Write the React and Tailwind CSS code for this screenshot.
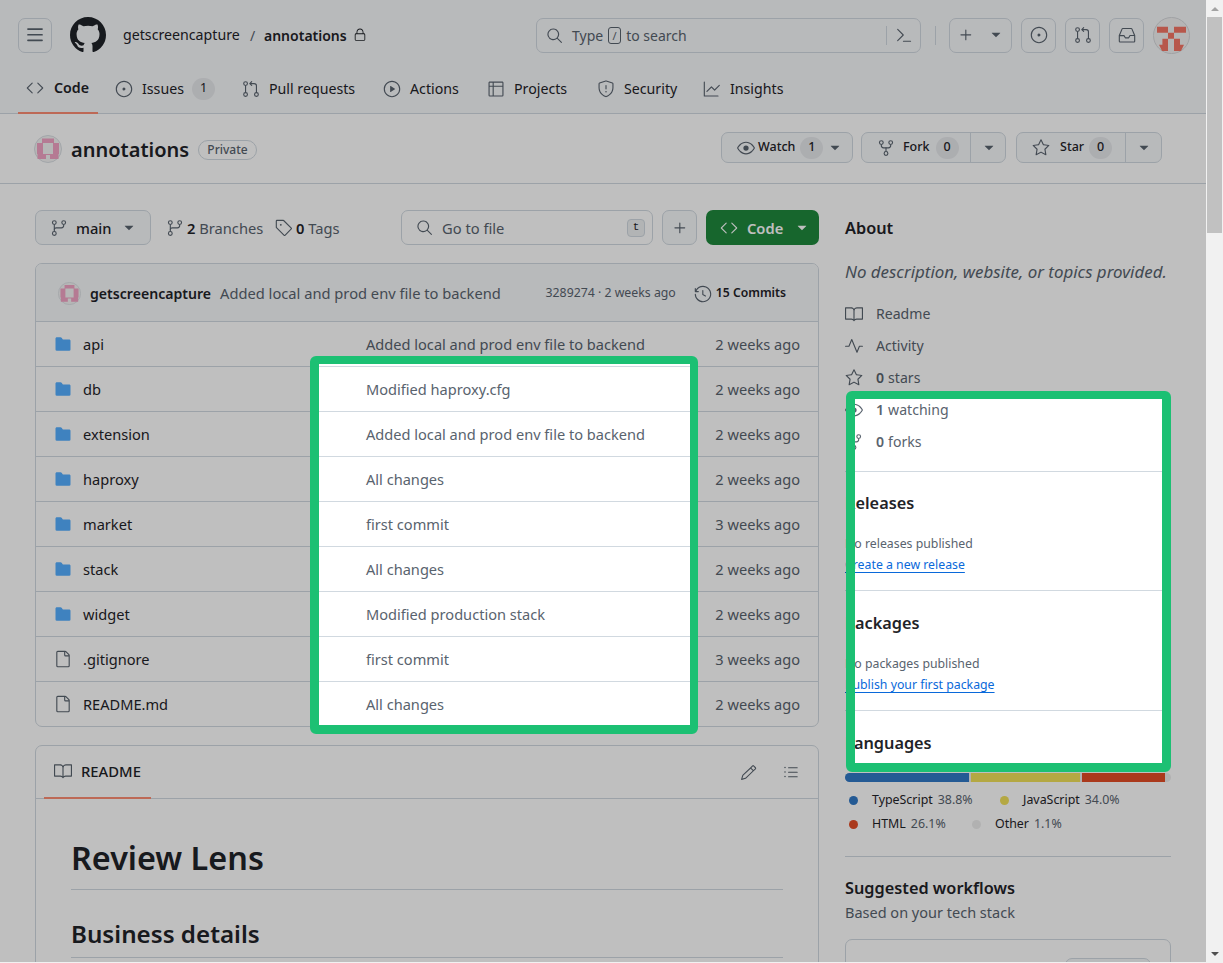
import React from "react";
import {
  GoLock, GoSearch, GoCommandPalette, GoPlus, GoTriangleDown, GoIssueOpened,
  GoGitPullRequest, GoInbox, GoCode, GoPlay, GoTable, GoShield, GoGraph, GoEye, GoRepoForked, GoStar,
  GoGitBranch, GoTag, GoHistory, GoFileDirectoryFill, GoFile, GoBook, GoPencil, GoListUnordered, GoPulse,
} from "react-icons/go";

const GoThreeBars = ({ size = 16 }) => (
  <svg viewBox="0 0 16 16" width={size} height={size} fill="currentColor">
    <path d="M1 2.75A.75.75 0 0 1 1.75 2h12.5a.75.75 0 0 1 0 1.5H1.75A.75.75 0 0 1 1 2.75Zm0 5A.75.75 0 0 1 1.75 7h12.5a.75.75 0 0 1 0 1.5H1.75A.75.75 0 0 1 1 7.75ZM1.75 12h12.5a.75.75 0 0 1 0 1.5H1.75a.75.75 0 0 1 0-1.5Z" />
  </svg>
);
const GoMarkGithub = ({ size = 16, className = "" }) => (
  <svg viewBox="0 0 16 16" width={size} height={size} fill="currentColor" className={className}>
    <path d="M8 0c4.42 0 8 3.58 8 8a8.013 8.013 0 0 1-5.45 7.59c-.4.08-.55-.17-.55-.38 0-.27.01-1.13.01-2.2 0-.75-.25-1.23-.54-1.48 1.78-.2 3.65-.88 3.65-3.95 0-.88-.31-1.59-.82-2.15.08-.2.36-1.02-.08-2.12 0 0-.67-.22-2.2.82-.64-.18-1.32-.27-2-.27-.68 0-1.36.09-2 .27-1.53-1.03-2.2-.82-2.2-.82-.44 1.1-.16 1.92-.08 2.12-.51.56-.82 1.28-.82 2.15 0 3.06 1.86 3.75 3.64 3.95-.23.2-.44.55-.51 1.07-.46.21-1.61.55-2.33-.66-.15-.24-.6-.83-1.23-.82-.67.01-.27.38.01.53.34.19.73.9.82 1.13.16.45.68 1.31 2.69.94 0 .67.01 1.3.01 1.49 0 .21-.15.45-.55.38A7.995 7.995 0 0 1 0 8c0-4.42 3.58-8 8-8Z" />
  </svg>
);

const Pink = ({ className }) => (
  <svg viewBox="0 0 28 28" className={className}>
    <circle cx="14" cy="14" r="13.5" fill="#f3f3f3" stroke="#d8dde2" />
    <path fill="#f2a3c4" fillRule="evenodd" d="M8 3.5h12V8h5v11h-.5v5H16v-4h-4v4H3.5v-5H3V8h5zM9 8v11h10V8z" />
  </svg>
);

const UserAvatar = () => (
  <svg viewBox="0 0 37 37" className="w-[37px] h-[37px] shrink-0">
    <circle cx="18.5" cy="18.5" r="18" fill="#f2f2f2" stroke="#d5d8db" />
    <path fill="#f57565" d="M4 9.7h11v6H4zM21 9.7h12v6H21zM15 15.7h6v6h-6zM9.4 21.7H15v6H9.4zM21 21.7h6v6h-6zM6 27.7h9v6.2H9zM21 27.7h10l-3 6.2h-7z" />
  </svg>
);

const HBtn = ({ children, className = "" }) => (
  <div className={`h-[35px] flex items-center justify-center rounded-[7px] border border-[#d1d9e0] text-[#59636e] ${className}`}>{children}</div>
);

const tabs = [
  { icon: GoIssueOpened, label: "Issues", count: "1", w: "w-[127px]" },
  { icon: GoGitPullRequest, label: "Pull requests", w: "w-[141px]" },
  { icon: GoPlay, label: "Actions", w: "w-[104px]" },
  { icon: GoTable, label: "Projects", w: "w-[110px]" },
  { icon: GoShield, label: "Security", w: "w-[106px]" },
  { icon: GoGraph, label: "Insights", w: "w-[100px]" },
];

const Counter = ({ children, className = "" }) => (
  <span className={`inline-flex items-center justify-center h-[22px] w-[23px] rounded-full bg-[#e6e8eb] text-[12.5px] text-[#1f2328] ${className}`}>{children}</span>
);

const Header = () => (
  <header className="bg-[#f6f8fa] border-b border-[#d1d9e0] h-[114px]">
    <div className="h-[70px] flex items-center pl-[18px]">
      <HBtn className="w-[34px]"><GoThreeBars size={18} /></HBtn>
      <GoMarkGithub size={36} className="ml-[18px] text-[#1f2328]" />
      <span className="ml-[17px] w-[118px] text-[14.2px] text-[#1f2328] whitespace-nowrap">getscreencapture</span>
      <span className="w-[23px] text-center text-[14px] text-[#59636e]">/</span>
      <span className="w-[89px] text-[14px] font-semibold text-[#1f2328] whitespace-nowrap">annotations</span>
      <GoLock size={14} className="text-[#1f2328]" />
      <div className="ml-[169px] w-[385px] h-[35px] rounded-[7px] border border-[#d1d9e0] flex items-center text-[#59636e] pl-[9px]">
        <GoSearch size={17} />
        <span className="ml-[9px] text-[14px]">Type</span>
        <span className="ml-[5px] w-[13px] h-[17px] rounded-[3px] border border-[#59636e] text-[11px] leading-[15px] text-center">/</span>
        <span className="ml-[5px] text-[14px] whitespace-nowrap">to search</span>
        <span className="ml-auto w-px h-[19px] bg-[#d1d9e0]" />
        <GoCommandPalette size={18} className="ml-[8px] mr-[7px]" />
      </div>
      <span className="ml-[14px] w-px h-[19px] bg-[#d1d9e0]" />
      <HBtn className="ml-[13px] w-[63px] gap-[13px]"><GoPlus size={18} /><GoTriangleDown size={16} /></HBtn>
      <HBtn className="ml-[9px] w-[35px]"><GoIssueOpened size={18} /></HBtn>
      <HBtn className="ml-[9px] w-[35px]"><GoGitPullRequest size={18} /></HBtn>
      <HBtn className="ml-[9px] w-[35px]"><GoInbox size={18} /></HBtn>
      <div className="ml-[9px]"><UserAvatar /></div>
    </div>
    <nav className="h-[43px] flex text-[14.2px] text-[#1f2328]">
      <div className="ml-[18px] mr-[17px] w-[80px] pl-[8px] pb-[7px] flex items-center gap-[10px] border-b-2 border-[#fd8c73] h-[44px] font-semibold">
        <GoCode size={18} className="text-[#59636e]" /><span>Code</span>
      </div>
      {tabs.map((t) => (
        <div key={t.label} className={`${t.w} h-[43px] pb-[6px] flex items-center gap-[9px]`}>
          <t.icon size={18} className="text-[#59636e] shrink-0" />
          <span className="whitespace-nowrap">{t.label}</span>
          {t.count && <Counter className="-ml-[1px]">{t.count}</Counter>}
        </div>
      ))}
    </nav>
  </header>
);

const RBtn = ({ children, className = "" }) => (
  <div className={`h-[31px] flex items-center rounded-[7px] border border-[#d1d9e0] bg-[#f6f8fa] text-[12.5px] font-medium text-[#1f2328] ${className}`}>{children}</div>
);
const Caret = ({ className = "" }) => <GoTriangleDown size={16} className={`text-[#59636e] ${className}`} />;

const RepoHead = () => (
  <div className="h-[70px] border-b border-[#d1d9e0] bg-white flex items-center pl-[34px]">
    <Pink className="w-[28px] h-[28px] shrink-0" />
    <span className="ml-[9px] mt-[2px] w-[127px] text-[20px] font-semibold text-[#1f2328] whitespace-nowrap">annotations</span>
    <span className="mt-[2px] h-[20px] w-[59px] rounded-full border border-[#d1d9e0] text-[12px] font-medium text-[#59636e] flex items-center justify-center">Private</span>
    <div className="ml-[464px] flex gap-[9px] -mt-[2px]">
      <RBtn className="w-[132px] pl-[15px]">
        <GoEye size={18} className="text-[#59636e]" /><span className="ml-[3px]">Watch</span>
        <Counter className="ml-[5px]">1</Counter><Caret className="ml-[4px]" />
      </RBtn>
      <RBtn className="w-[145px] -ml-px">
        <div className="w-[109px] h-full flex items-center pl-[15px] border-r border-[#d1d9e0]">
          <GoRepoForked size={18} className="text-[#59636e]" /><span className="ml-[8px]">Fork</span><Counter className="ml-[6px]">0</Counter>
        </div>
        <Caret className="ml-[10px]" />
      </RBtn>
      <RBtn className="w-[146px] ml-px">
        <div className="w-[109px] h-full flex items-center pl-[15px] border-r border-[#d1d9e0]">
          <GoStar size={18} className="text-[#59636e]" /><span className="ml-[10px]">Star</span><Counter className="ml-[5px]">0</Counter>
        </div>
        <Caret className="ml-[10px]" />
      </RBtn>
    </div>
  </div>
);

const files = [
  ["api", "Added local and prod env file to backend", "2 weeks ago"],
  ["db", "Modified haproxy.cfg", "2 weeks ago"],
  ["extension", "Added local and prod env file to backend", "2 weeks ago"],
  ["haproxy", "All changes", "2 weeks ago"],
  ["market", "first commit", "3 weeks ago"],
  ["stack", "All changes", "2 weeks ago"],
  ["widget", "Modified production stack", "2 weeks ago"],
  [".gitignore", "first commit", "3 weeks ago", true],
  ["README.md", "All changes", "2 weeks ago", true],
];

const Toolbar = () => (
  <div className="h-[35px] flex items-center text-[14.7px]">
    <div className="w-[116px] h-[35px] flex items-center pl-[14px] rounded-[7px] border border-[#d1d9e0] bg-[#f6f8fa] font-medium text-[#1f2328]">
      <GoGitBranch size={18} className="text-[#59636e]" /><span className="ml-[8px] mt-px">main</span><Caret className="ml-[9px]" />
    </div>
    <GoGitBranch size={18} className="ml-[15px] text-[#59636e]" />
    <span className="ml-[3px] mt-px w-[88px] text-[#59636e] whitespace-nowrap"><b className="font-semibold text-[#1f2328]">2</b> Branches</span>
    <GoTag size={18} className="text-[#59636e]" />
    <span className="ml-[3px] mt-px w-[105px] text-[#59636e] whitespace-nowrap"><b className="font-semibold text-[#1f2328]">0</b> Tags</span>
    <div className="w-[252px] h-[35px] rounded-[7px] border border-[#d1d9e0] flex items-center pl-[14px] text-[#59636e]">
      <GoSearch size={17} /><span className="ml-[9px] mt-px">Go to file</span>
      <span className="ml-auto mr-[7px] w-[18px] h-[18px] rounded-[4px] bg-[#eef0f2] border border-[#d1d9e0] text-[11px] leading-[15px] text-center text-[#1f2328] font-['Liberation_Mono',monospace]">t</span>
    </div>
    <div className="ml-[9px] w-[35px] h-[35px] rounded-[7px] border border-[#d1d9e0] bg-[#f6f8fa] flex items-center justify-center text-[#59636e]"><GoPlus size={18} /></div>
    <div className="ml-[9px] w-[113px] h-[35px] rounded-[7px] bg-[#1f883d] text-white font-semibold flex items-center pl-[14px]">
      <GoCode size={18} /><span className="ml-[9px] mt-px">Code</span><GoTriangleDown size={16} className="ml-[11px]" />
    </div>
  </div>
);

const FileTable = () => (
  <div className="mt-[18px] h-[464px] rounded-[7px] border border-[#d1d9e0] overflow-hidden">
    <div className="h-[58px] bg-[#f6f8fa] border-b border-[#d1d9e0] flex items-center pl-[22px] pr-[32px] pt-[2px]">
      <Pink className="w-[23px] h-[23px] shrink-0" />
      <span className="ml-[9px] w-[130px] text-[14.1px] font-semibold text-[#1f2328] whitespace-nowrap">getscreencapture</span>
      <span className="text-[14.7px] text-[#59636e] whitespace-nowrap">Added local and prod env file to backend</span>
      <span className="ml-auto text-[12.3px] text-[#59636e] whitespace-nowrap">3289274 · 2 weeks ago</span>
      <GoHistory size={18} className="ml-[18px] text-[#59636e]" />
      <span className="ml-[4px] text-[12.2px] font-semibold text-[#1f2328] whitespace-nowrap">15 Commits</span>
    </div>
    {files.map(([name, msg, date, isFile], i) => (
      <div key={name} className={`flex items-center pl-[18px] pr-[18px] text-[14.6px] ${i === 8 ? "h-[44px]" : "h-[45px] border-b border-[#d1d9e0]"}`}>
        {isFile ? <GoFile size={18} className="text-[#59636e] shrink-0" /> : <GoFileDirectoryFill size={18} className="text-[#54aeff] shrink-0" />}
        <span className="ml-[11px] mt-px w-[283px] text-[#1f2328]">{name}</span>
        <span className="mt-px text-[#59636e]">{msg}</span>
        <span className="ml-auto mt-px text-[#59636e]">{date}</span>
      </div>
    ))}
  </div>
);

const Readme = () => (
  <div className="mt-[18px] h-[300px] rounded-t-[7px] border border-[#d1d9e0]">
    <div className="h-[53px] border-b border-[#d1d9e0] flex items-center pr-[18px]">
      <div className="ml-[8px] w-[107px] h-[53px] pl-[10px] border-b-2 border-[#fd8c73] flex items-center gap-[9px] text-[14.8px] font-medium text-[#1f2328]">
        <GoBook size={18} className="text-[#59636e]" /><span>README</span>
      </div>
      <GoPencil size={17} className="ml-auto text-[#59636e]" />
      <GoListUnordered size={18} className="ml-[25px] text-[#59636e]" />
    </div>
    <div className="pl-[35px] pr-[35px] pt-[36px] text-[#1f2328]">
      <h1 className="text-[32.4px] leading-[44px] font-semibold pb-[10px] border-b border-[#d1d9e0]">Review Lens</h1>
      <h2 className="mt-[27px] text-[24.2px] leading-[33px] font-semibold pb-[7px] border-b border-[#d1d9e0]">Business details</h2>
    </div>
  </div>
);

const about = [
  [GoBook, null, "Readme"],
  [GoPulse, null, "Activity"],
  [GoStar, "0", "stars"],
  [GoEye, "1", "watching"],
  [GoRepoForked, "0", "forks"],
];

const SideH = ({ children }) => <h2 className="text-[16.3px] leading-[22px] font-semibold text-[#1f2328]">{children}</h2>;
const SideLink = ({ children }) => <a className="text-[12.3px] leading-[21px] text-[#0969da] underline underline-offset-[3px] block whitespace-nowrap">{children}</a>;

const Lang = ({ dot, name, pct, className = "" }) => (
  <span className={`flex items-center whitespace-nowrap text-[12.4px] ${className}`}>
    <span className={`w-[9px] h-[9px] rounded-full mr-[14px] ${dot}`} />
    <span className="text-[#1f2328] mr-[5px]">{name}</span>
    <span className="text-[#59636e]">{pct}</span>
  </span>
);

const Sidebar = () => (
  <aside className="ml-[26px] w-[326px]">
    <div className="h-[35px] flex items-center"><SideH>About</SideH></div>
    <p className="mt-[15px] text-[16.9px] leading-[24px] italic text-[#59636e] whitespace-nowrap">No description, website, or topics provided.</p>
    <ul className="mt-[14px] text-[14.1px] text-[#59636e]">
      {about.map(([I, n, l]) => (
        <li key={l} className="h-[32px] flex items-center">
          <I size={18} className="shrink-0" />
          <span className="ml-[13px]">{n && <b className="font-semibold mr-[4px]">{n}</b>}{l}</span>
        </li>
      ))}
    </ul>
    <div className="mt-[13px] border-t border-[#d1d9e0] h-[119px] pt-[20px]">
      <SideH>Releases</SideH>
      <p className="mt-[20px] text-[12.3px] leading-[20px] text-[#59636e]">No releases published</p>
      <SideLink>Create a new release</SideLink>
    </div>
    <div className="border-t border-[#d1d9e0] h-[120px] pt-[21px]">
      <SideH>Packages</SideH>
      <p className="mt-[20px] text-[12.3px] leading-[20px] text-[#59636e]">No packages published</p>
      <SideLink>Publish your first package</SideLink>
    </div>
    <div className="border-t border-[#d1d9e0] pt-[21px]">
      <SideH>Languages</SideH>
      <div className="mt-[19px] h-[9px] flex gap-[2px] rounded-full overflow-hidden bg-[#ededed]">
        <span className="w-[124px] bg-[#3178c6]" />
        <span className="w-[109px] bg-[#f1e05a]" />
        <span className="w-[83px] bg-[#e34c26]" />
      </div>
      <div className="mt-[6px] pl-[4px]">
        <div className="h-[25px] flex items-center">
          <Lang dot="bg-[#3178c6]" name="TypeScript" pct="38.8%" className="w-[151px]" />
          <Lang dot="bg-[#f1e05a]" name="JavaScript" pct="34.0%" />
        </div>
        <div className="h-[23px] flex items-center">
          <Lang dot="bg-[#e34c26]" name="HTML" pct="26.1%" className="w-[123px]" />
          <Lang dot="bg-[#ededed]" name="Other" pct="1.1%" />
        </div>
      </div>
    </div>
    <div className="mt-[20px] border-t border-[#d1d9e0] pt-[20px]">
      <SideH>Suggested workflows</SideH>
      <p className="mt-[3px] text-[14.5px] leading-[21px] text-[#59636e]">Based on your tech stack</p>
      <div className="mt-[16px] h-[120px] rounded-[7px] border border-[#d1d9e0] flex justify-end pt-[18px] pr-[19px]">
        <div className="w-[86px] h-[30px] rounded-[7px] border border-[#d1d9e0] bg-[#f6f8fa]" />
      </div>
    </div>
  </aside>
);

export default function App() {
  return (
    <div className="h-screen overflow-hidden flex bg-[#f1f1f1] font-['Noto_Sans','Liberation_Sans',sans-serif]">
      <div className="relative w-[1206px] h-[962px] overflow-hidden bg-white shrink-0">
        <Header />
        <RepoHead />
        <div className="flex pl-[35px] pt-[26px]">
          <main className="w-[784px] shrink-0">
            <Toolbar />
            <FileTable />
            <Readme />
          </main>
          <Sidebar />
        </div>
        <div className="absolute inset-0 bg-black/25 [clip-path:path(evenodd,'M0_0H1206V962H0Z_M319_364H690V725H319Z_M855_399H1162V763H855Z')]" />
        <div className="absolute left-[310px] top-[356px] w-[388px] h-[378px] rounded-[6px] border-[9px] border-r-[8px] border-t-[8px] border-[#1cc073]" />
        <div className="absolute left-[846px] top-[391px] w-[325px] h-[381px] rounded-[6px] border-[9px] border-t-[8px] border-[#1cc073]" />
      </div>
      <div className="w-[17px] flex flex-col items-center">
        <GoTriangleDown size={14} className="mt-[2px] rotate-180 text-[#a3a3a3]" />
        <div className="mt-px w-[15px] h-[216px] bg-[#c1c1c1]" />
        <GoTriangleDown size={14} className="mt-auto mb-[2px] text-[#505050]" />
      </div>
    </div>
  );
}
